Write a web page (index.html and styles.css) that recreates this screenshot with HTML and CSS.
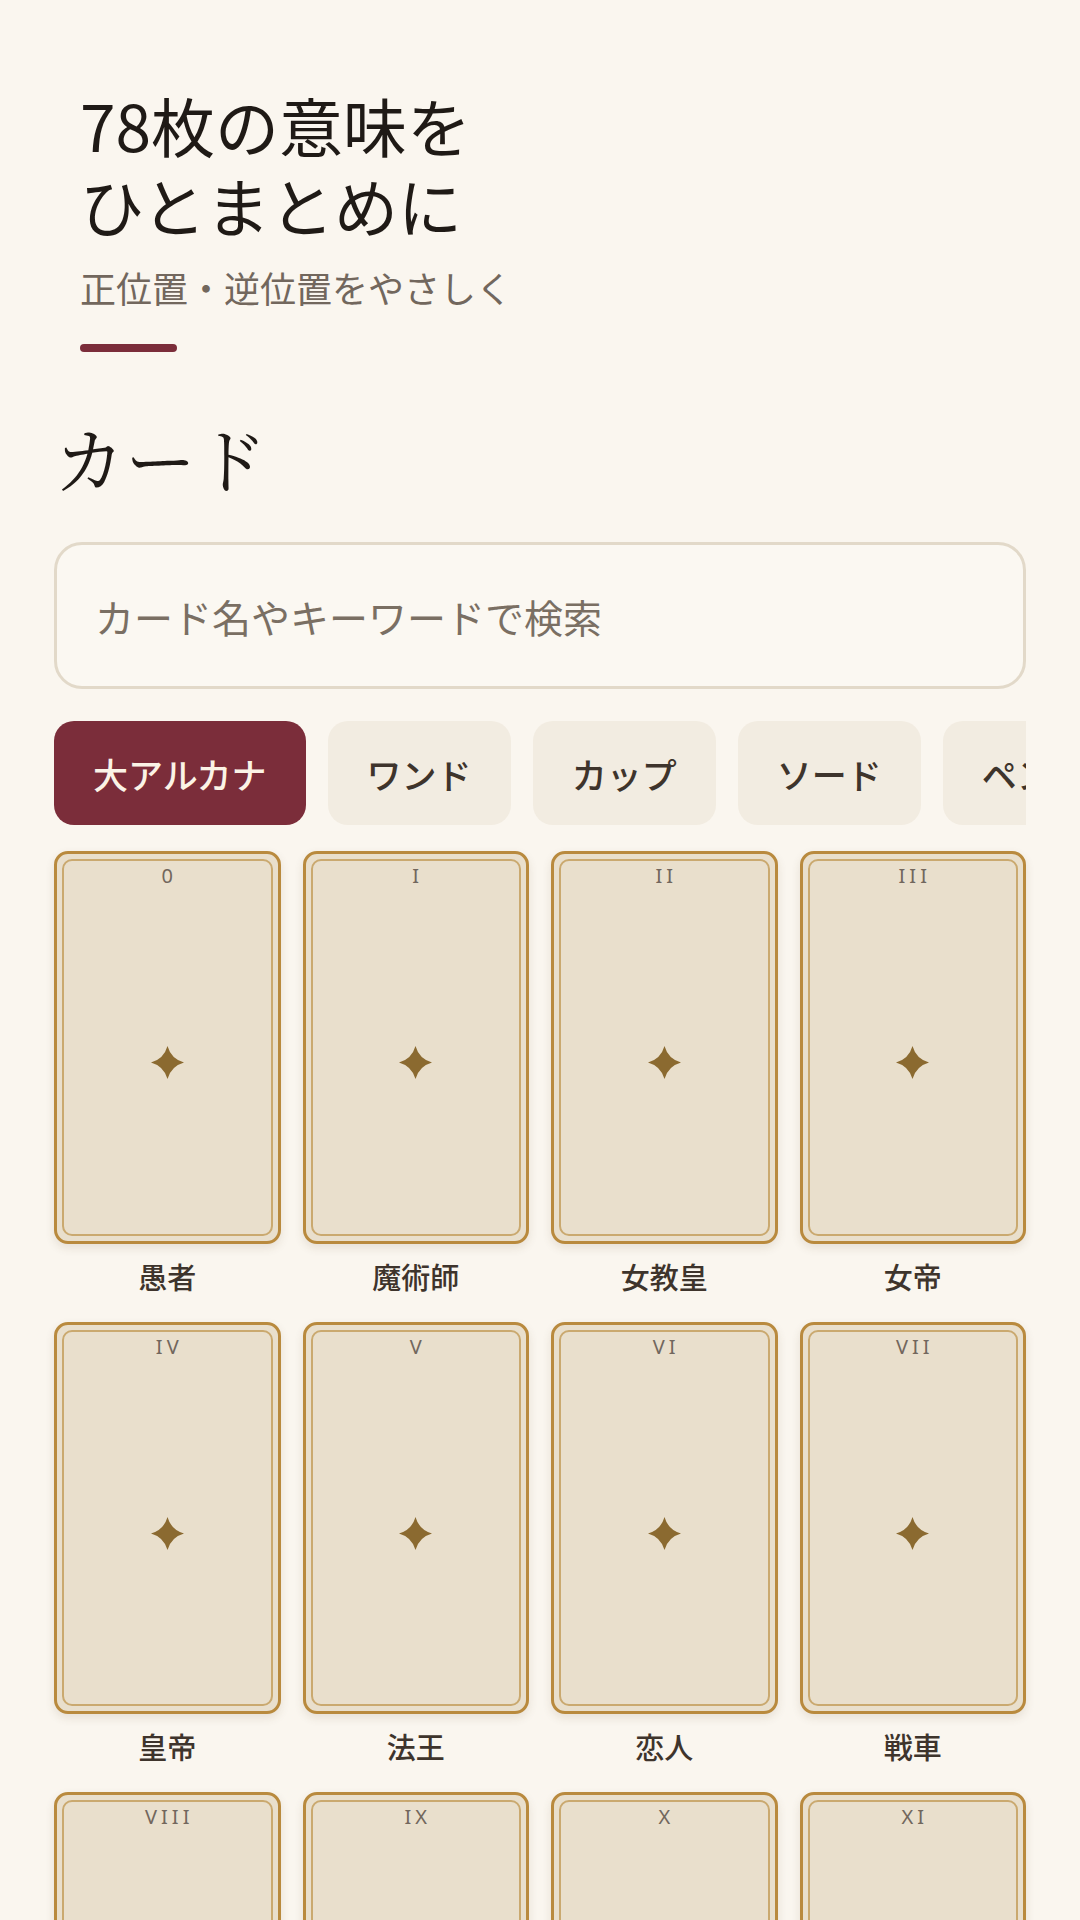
FILE: index.html
```html
<!DOCTYPE html>
<html lang="ja">
<head>
    <meta charset="UTF-8">
    <meta name="viewport" content="width=device-width, initial-scale=1.0">
    <title>タロット - カード一覧</title>
    <link rel="stylesheet" href="styles.css">
</head>
<body>
    <div class="page">
        <header class="hero">
            <h1>78枚の意味を<br>ひとまとめに</h1>
            <p class="lead">正位置・逆位置をやさしく</p>
            <div class="accent"></div>
        </header>

        <h2 class="section-title">カード</h2>

        <input type="text" class="search-box" placeholder="カード名やキーワードで検索">

        <div class="chips">
            <button class="chip active">大アルカナ</button>
            <button class="chip">ワンド</button>
            <button class="chip">カップ</button>
            <button class="chip">ソード</button>
            <button class="chip">ペンタクル</button>
        </div>

        <div class="card-grid">
            <div class="card-item"><div class="card"><div class="frame"><span class="numeral">0</span><div class="emblem"><svg viewBox="0 0 32 32"><path d="M16 0Q19.5 12.5 32 16Q19.5 19.5 16 32Q12.5 19.5 0 16Q12.5 12.5 16 0Z"/></svg></div></div></div><div class="card-name">愚者</div></div>
            <div class="card-item"><div class="card"><div class="frame"><span class="numeral">I</span><div class="emblem"><svg viewBox="0 0 32 32"><path d="M16 0Q19.5 12.5 32 16Q19.5 19.5 16 32Q12.5 19.5 0 16Q12.5 12.5 16 0Z"/></svg></div></div></div><div class="card-name">魔術師</div></div>
            <div class="card-item"><div class="card"><div class="frame"><span class="numeral">II</span><div class="emblem"><svg viewBox="0 0 32 32"><path d="M16 0Q19.5 12.5 32 16Q19.5 19.5 16 32Q12.5 19.5 0 16Q12.5 12.5 16 0Z"/></svg></div></div></div><div class="card-name">女教皇</div></div>
            <div class="card-item"><div class="card"><div class="frame"><span class="numeral">III</span><div class="emblem"><svg viewBox="0 0 32 32"><path d="M16 0Q19.5 12.5 32 16Q19.5 19.5 16 32Q12.5 19.5 0 16Q12.5 12.5 16 0Z"/></svg></div></div></div><div class="card-name">女帝</div></div>
            <div class="card-item"><div class="card"><div class="frame"><span class="numeral">IV</span><div class="emblem"><svg viewBox="0 0 32 32"><path d="M16 0Q19.5 12.5 32 16Q19.5 19.5 16 32Q12.5 19.5 0 16Q12.5 12.5 16 0Z"/></svg></div></div></div><div class="card-name">皇帝</div></div>
            <div class="card-item"><div class="card"><div class="frame"><span class="numeral">V</span><div class="emblem"><svg viewBox="0 0 32 32"><path d="M16 0Q19.5 12.5 32 16Q19.5 19.5 16 32Q12.5 19.5 0 16Q12.5 12.5 16 0Z"/></svg></div></div></div><div class="card-name">法王</div></div>
            <div class="card-item"><div class="card"><div class="frame"><span class="numeral">VI</span><div class="emblem"><svg viewBox="0 0 32 32"><path d="M16 0Q19.5 12.5 32 16Q19.5 19.5 16 32Q12.5 19.5 0 16Q12.5 12.5 16 0Z"/></svg></div></div></div><div class="card-name">恋人</div></div>
            <div class="card-item"><div class="card"><div class="frame"><span class="numeral">VII</span><div class="emblem"><svg viewBox="0 0 32 32"><path d="M16 0Q19.5 12.5 32 16Q19.5 19.5 16 32Q12.5 19.5 0 16Q12.5 12.5 16 0Z"/></svg></div></div></div><div class="card-name">戦車</div></div>
            <div class="card-item"><div class="card"><div class="frame"><span class="numeral">VIII</span><div class="emblem"><svg viewBox="0 0 32 32"><path d="M16 0Q19.5 12.5 32 16Q19.5 19.5 16 32Q12.5 19.5 0 16Q12.5 12.5 16 0Z"/></svg></div></div></div><div class="card-name">力</div></div>
            <div class="card-item"><div class="card"><div class="frame"><span class="numeral">IX</span><div class="emblem"><svg viewBox="0 0 32 32"><path d="M16 0Q19.5 12.5 32 16Q19.5 19.5 16 32Q12.5 19.5 0 16Q12.5 12.5 16 0Z"/></svg></div></div></div><div class="card-name">隠者</div></div>
            <div class="card-item"><div class="card"><div class="frame"><span class="numeral">X</span><div class="emblem"><svg viewBox="0 0 32 32"><path d="M16 0Q19.5 12.5 32 16Q19.5 19.5 16 32Q12.5 19.5 0 16Q12.5 12.5 16 0Z"/></svg></div></div></div><div class="card-name">運命の輪</div></div>
            <div class="card-item"><div class="card"><div class="frame"><span class="numeral">XI</span><div class="emblem"><svg viewBox="0 0 32 32"><path d="M16 0Q19.5 12.5 32 16Q19.5 19.5 16 32Q12.5 19.5 0 16Q12.5 12.5 16 0Z"/></svg></div></div></div><div class="card-name">正義</div></div>
        </div>
    </div>
</body>
</html>
```

FILE: styles.css
```css
* { margin: 0; padding: 0; box-sizing: border-box; }
:root {
    --bg: #faf6ef;
    --ink: #1f1a16; --ink-soft: #3e342c; --muted: #72675d;
    --wine: #7b2d3a;
    --chip: #f2ece1;
    --gold: #b98a3e; --gold-soft: #caa96f; --paper: #e9dfcc;
    --line: #e2d9c9;
}
body { background: var(--bg); color: var(--ink); font-family: "Noto Sans CJK JP", "Noto Sans", sans-serif; }
.page { padding: 84px 54px 60px; }

/* hero */
.hero { padding-left: 26px; }
.hero h1 { font-size: 64px; font-weight: 400; line-height: 80px; color: var(--ink); }
.lead { margin-top: 17px; font-size: 36px; line-height: 52px; color: var(--muted); }
.accent { width: 97px; height: 8px; margin-top: 31px; border-radius: 4px; background: var(--wine); }

.section-title { margin-top: 59px; font-family: "Noto Serif CJK JP", "IPAMincho", serif; font-size: 71px; font-weight: 400; line-height: 90px; color: var(--ink); }

/* search */
.search-box { display: block; width: 100%; height: 147px; margin-top: 41px; padding: 0 38px; font-family: inherit; font-size: 39px; color: var(--ink); background: #fbf8f2; border: 3px solid var(--line); border-radius: 28px; }
.search-box::placeholder { color: #7a6f63; }
.search-box:focus { outline: none; border-color: var(--gold-soft); }

/* filter chips */
.chips { display: flex; gap: 22px; margin-top: 32px; overflow-x: auto; scrollbar-width: none; }
.chip { flex: none; height: 104px; padding: 0 39px; font-family: inherit; font-size: 35px; font-weight: 500; color: var(--ink-soft); background: var(--chip); border: none; border-radius: 20px; cursor: pointer; }
.chip.active { background: var(--wine); color: #fbf3e6; }

/* cards */
.card-grid { display: grid; grid-template-columns: repeat(4, 1fr); column-gap: 22px; row-gap: 24px; margin-top: 26px; }
.card { aspect-ratio: 0.577; padding: 5px; background: var(--paper); border: 3px solid var(--gold); border-radius: 14px; box-shadow: 0 4px 10px rgba(90, 65, 30, 0.12); }
.frame { display: flex; flex-direction: column; height: 100%; border: 2.5px solid var(--gold-soft); border-radius: 10px; }
.numeral { padding-top: 3px; font-family: "Noto Sans", sans-serif; font-size: 20px; line-height: 24px; letter-spacing: 4px; text-indent: 4px; text-align: center; color: var(--muted); }
.emblem { flex: 1; display: flex; align-items: center; justify-content: center; padding-top: 4px; }
.emblem svg { width: 33px; height: 33px; fill: #8b6a30; }
.card-name { margin-top: 10px; font-size: 29px; font-weight: 500; line-height: 44px; text-align: center; color: var(--ink-soft); }
```
